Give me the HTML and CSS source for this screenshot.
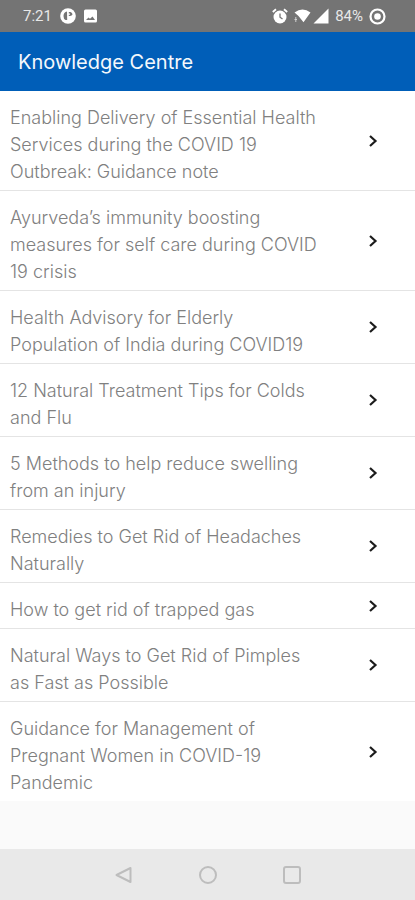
FILE: index.html
```html
<!DOCTYPE html>
<html lang="en">
<head>
  <meta charset="UTF-8" />
  <meta name="viewport" content="width=device-width, initial-scale=1.0"/>
  <title>Knowledge Centre</title>
  <link rel="stylesheet" href="styles.css">
</head>
<body>
  <div class="status-bar">
    <div class="status-group">
      <span class="time">7:21</span>
      <svg width="16" height="16" viewBox="0 0 16 16">
        <circle cx="8" cy="8" r="7.8" fill="#fff"/>
        <path d="M7 3.5 Q3.5 4 3.5 8 Q3.5 11 5.5 12 H7.2 Z" fill="#747474"/>
        <path d="M8.8 4 H10.5 Q12.5 4.5 12.5 6.5 Q11.5 8.2 8.8 8 V6.8 H10 V5.6 H8.8 Z" fill="#747474"/>
      </svg>
      <svg class="picture-icon" width="13" height="14" viewBox="0 0 13 14">
        <rect x="0" y="0.5" width="13" height="13" rx="1.5" fill="#fff"/>
        <path d="M2 11 L4.5 8.5 L6 9.8 L8.5 7.5 L11 11 Z" fill="#747474"/>
      </svg>
    </div>
    <div class="status-group status-right">
      <svg width="16" height="16" viewBox="0 0 16 16">
        <circle cx="8" cy="9" r="6.5" fill="#fff"/>
        <path d="M0.8 4 L4 1.2 M15.2 4 L12 1.2" stroke="#fff" stroke-width="1.8"/>
        <path d="M8 5.5 V9.2 L10.5 11" stroke="#747474" stroke-width="1.3" fill="none"/>
      </svg>
      <svg class="wifi-icon" width="17" height="14" viewBox="0 0 17 14">
        <path d="M0.5 3.5 Q8.5 -2.5 16.5 3.5 L9.5 13.2 L4.5 7 Z" fill="#fff"/>
        <path d="M1.8 8 V13 M0.5 10.5 H3" stroke="#d0d0d0" stroke-width="1"/>
      </svg>
      <svg width="16" height="16" viewBox="0 0 16 16">
        <path d="M15.5 0.5 V15.5 H0.5 Z" fill="#fff"/>
      </svg>
      <span class="battery">84%</span>
      <svg width="17" height="17" viewBox="0 0 17 17">
        <circle cx="8.5" cy="8.5" r="7" fill="none" stroke="#fff" stroke-width="2.2"/>
        <circle cx="8.5" cy="8.5" r="3.3" fill="#fff"/>
      </svg>
    </div>
  </div>

  <header class="header">
    <h1>Knowledge Centre</h1>
  </header>

  <main class="content">
    <ul class="list">
      <li><a href="#"><span class="title">Enabling Delivery of Essential Health Services during the COVID 19 Outbreak: Guidance note</span><svg class="chevron" viewBox="0 0 10 14"><path d="M2 2 L7.5 7 L2 12"/></svg></a></li>
      <li><a href="#"><span class="title">Ayurveda’s immunity boosting measures for self care during COVID 19 crisis</span><svg class="chevron" viewBox="0 0 10 14"><path d="M2 2 L7.5 7 L2 12"/></svg></a></li>
      <li><a href="#"><span class="title">Health Advisory for Elderly Population of India during COVID19</span><svg class="chevron" viewBox="0 0 10 14"><path d="M2 2 L7.5 7 L2 12"/></svg></a></li>
      <li><a href="#"><span class="title">12 Natural Treatment Tips for Colds and Flu</span><svg class="chevron" viewBox="0 0 10 14"><path d="M2 2 L7.5 7 L2 12"/></svg></a></li>
      <li><a href="#"><span class="title">5 Methods to help reduce swelling from an injury</span><svg class="chevron" viewBox="0 0 10 14"><path d="M2 2 L7.5 7 L2 12"/></svg></a></li>
      <li><a href="#"><span class="title">Remedies to Get Rid of Headaches Naturally</span><svg class="chevron" viewBox="0 0 10 14"><path d="M2 2 L7.5 7 L2 12"/></svg></a></li>
      <li><a href="#"><span class="title">How to get rid of trapped gas</span><svg class="chevron" viewBox="0 0 10 14"><path d="M2 2 L7.5 7 L2 12"/></svg></a></li>
      <li><a href="#"><span class="title">Natural Ways to Get Rid of Pimples as Fast as Possible</span><svg class="chevron" viewBox="0 0 10 14"><path d="M2 2 L7.5 7 L2 12"/></svg></a></li>
      <li><a href="#"><span class="title">Guidance for Management of Pregnant Women in COVID-19 Pandemic</span><svg class="chevron" viewBox="0 0 10 14"><path d="M2 2 L7.5 7 L2 12"/></svg></a></li>
    </ul>
  </main>

  <nav class="nav-bar">
    <button type="button" aria-label="Back">
      <svg width="18" height="18" viewBox="0 0 18 18"><path d="M15.5 2 V16 L1.5 9 Z"/></svg>
    </button>
    <button type="button" aria-label="Home">
      <svg width="18" height="18" viewBox="0 0 18 18"><circle cx="9" cy="9" r="8"/></svg>
    </button>
    <button type="button" aria-label="Recent apps">
      <svg width="18" height="18" viewBox="0 0 18 18"><rect x="1" y="1" width="16" height="16" rx="2"/></svg>
    </button>
  </nav>
</body>
</html>
```
FILE: styles.css
```css
* {
  margin: 0;
  padding: 0;
  box-sizing: border-box;
}

body {
  display: flex;
  flex-direction: column;
  min-height: 100vh;
  background: #fafafa;
  font-family: Inter, "Liberation Sans", sans-serif;
}

/* Status bar */
.status-bar {
  display: flex;
  justify-content: space-between;
  align-items: center;
  height: 32px;
  padding: 0 29px 0 23px;
  background: #747474;
  color: #e8e8e8;
  font-family: Roboto, sans-serif;
  font-size: 15px;
}

.status-group {
  display: flex;
  align-items: center;
  gap: 8px;
}

.status-right {
  gap: 6px;
}

.wifi-icon {
  margin-right: -4px;
}

/* Title bar */
.header {
  display: flex;
  align-items: center;
  height: 59px;
  padding: 0 18px;
  background: #005eb8;
  color: #f4f8fc;
}

.header h1 {
  font-size: 20px;
  font-weight: 400;
}

/* Articles */
.content {
  flex: 1;
}

.list {
  list-style: none;
  background: #fff;
}

.list li {
  border-bottom: 1px solid #e4e4e4;
}

.list li:last-child {
  border-bottom-color: #fafafa;
}

.list a {
  display: flex;
  justify-content: space-between;
  align-items: center;
  padding: 0 37px 0 10px;
  color: #808080;
  text-decoration: none;
}

.title {
  flex: 0 1 312px;
  padding: 13px 0 5px;
  font-size: 18px;
  font-weight: 300;
  line-height: 27px;
}

.chevron {
  flex: none;
  width: 10px;
  height: 14px;
  fill: none;
  stroke: #1c1c1c;
  stroke-width: 2.2;
}

/* Navigation buttons */
.nav-bar {
  display: flex;
  justify-content: center;
  align-items: center;
  gap: 66px;
  height: 51px;
  background: #e9e9e9;
}

.nav-bar button {
  display: flex;
  border: none;
  background: none;
  cursor: pointer;
}

.nav-bar svg {
  fill: none;
  stroke: #bdbdbd;
  stroke-width: 2;
  stroke-linejoin: round;
}
```
